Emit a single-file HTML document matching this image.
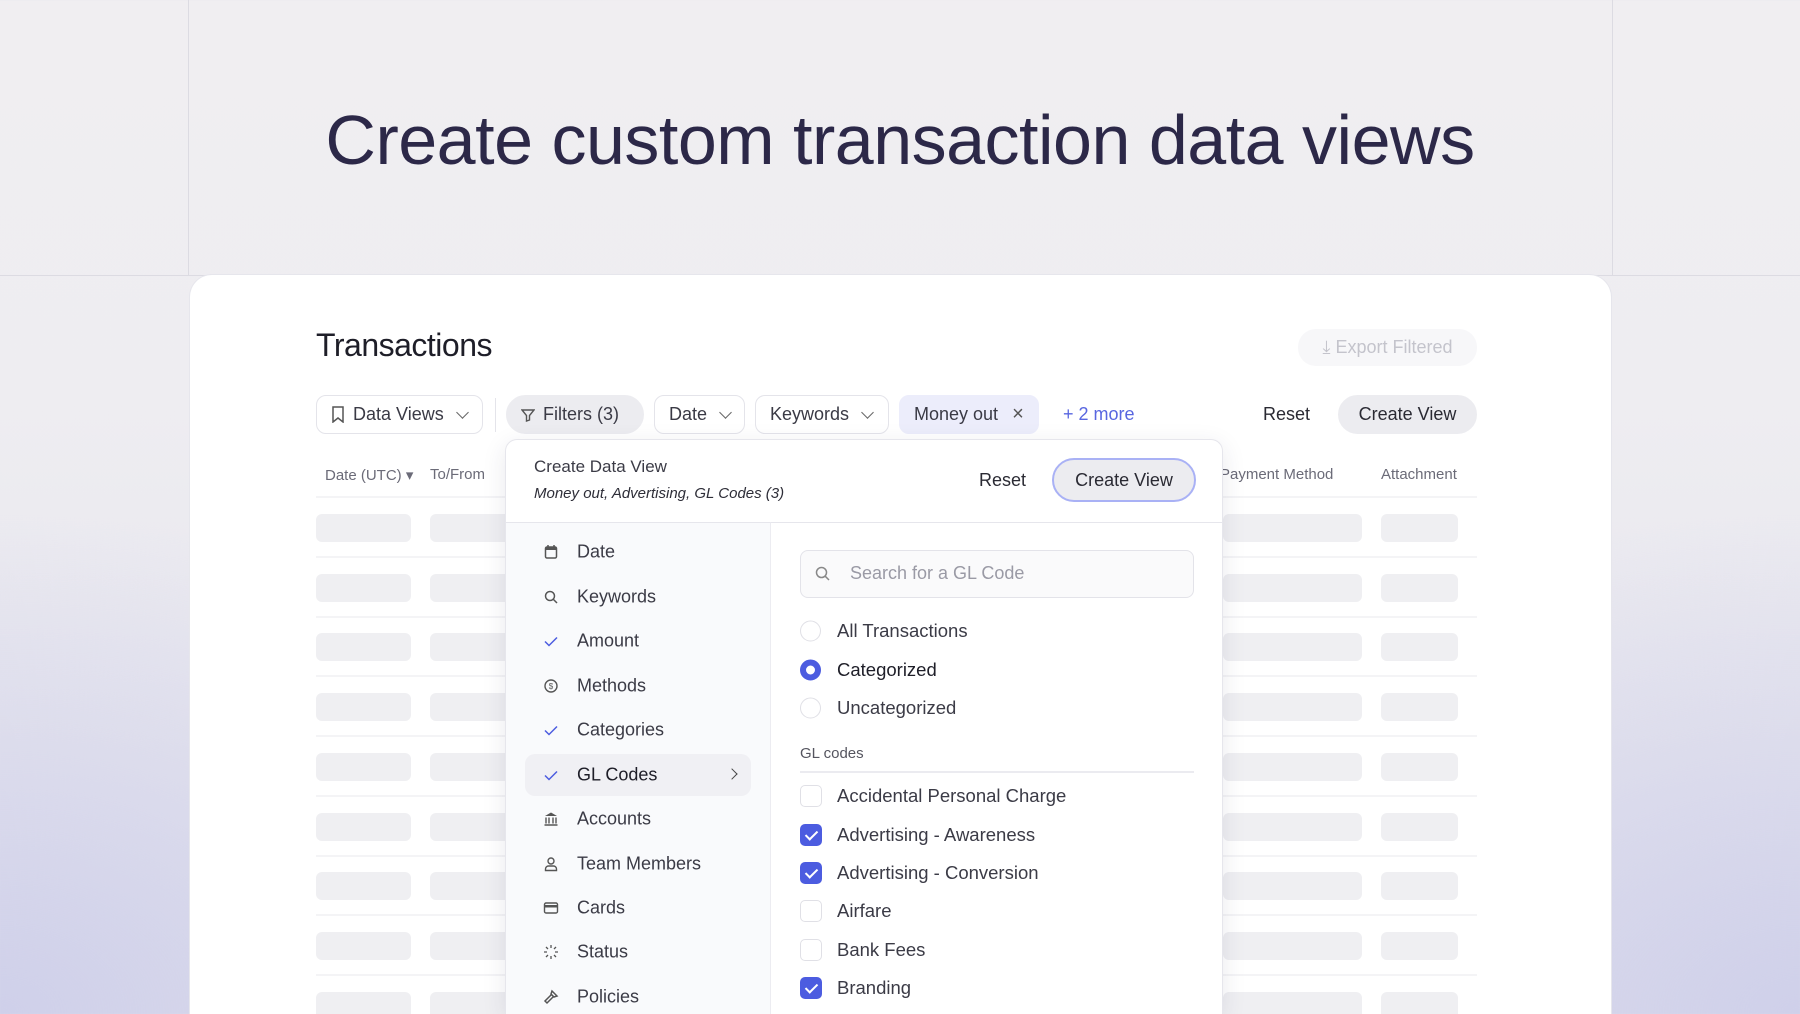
<!DOCTYPE html>
<html style="width:1800px;height:1014px;overflow:hidden"><head><meta charset="utf-8"><style>
*{margin:0;padding:0;box-sizing:border-box}
body{width:1800px;height:1014px;overflow:hidden;font-family:"Liberation Sans",sans-serif;position:relative;
background:radial-gradient(ellipse 700px 500px at 0% 100%,#cfd0ea 0%,rgba(207,208,234,0) 100%),radial-gradient(ellipse 700px 500px at 100% 100%,#cfd0ea 0%,rgba(207,208,234,0) 100%),linear-gradient(#f0eef1,#eeedf1 40%,#e2e1ec);}
.a{position:absolute}
.vl{position:absolute;top:0;height:275px;width:1px;background:#dcdbe2}
.hl{position:absolute;top:275px;height:1px;background:#dcdbe2}
.card{left:190px;top:275px;width:1421px;height:739px;background:#fff;border-radius:22px 22px 0 0;box-shadow:0 0 0 1px #e6e6ec}
.btn{position:absolute;top:395px;height:39px;border-radius:10px;border:1px solid #e4e4ea;display:flex;align-items:center;font-size:18px;color:#3a3a45;padding-left:14px;gap:8px;background:#fff}
.chev{width:9px;height:9px;border-right:1.6px solid #666;border-bottom:1.6px solid #666;transform:rotate(45deg);margin-top:-5px;margin-left:6px}
.th{position:absolute;top:466px;font-size:15px;color:#6b6b78}
.sk{position:absolute;height:28px;background:#efeff2;border-radius:6px}
.rl{position:absolute;height:2px;background:#f4f4f6}
.mi{position:absolute;left:577px;font-size:18px;color:#3b3b46;transform:translateY(-50%)}
.ic{position:absolute;left:543px;width:16px;height:16px;transform:translateY(-50%)}
.rad{position:absolute;left:800px;width:21px;height:21px;border-radius:50%;border:1.5px solid #e0e0e6;background:#fff;transform:translateY(-50%)}
.cb{position:absolute;left:800px;width:22px;height:22px;border-radius:5px;border:1.5px solid #e0e0e6;background:#fff;transform:translateY(-50%)}
.cb.on{background:#4c5ce0;border-color:#4c5ce0}
.cb.on::after{content:"";position:absolute;left:7px;top:3px;width:5px;height:10px;border-right:2px solid #fff;border-bottom:2px solid #fff;transform:rotate(45deg)}
.lt{position:absolute;left:837px;font-size:18.5px;color:#3b3b46;transform:translateY(-50%)}
</style></head><body>
<div class="vl" style="left:188px"></div><div class="vl" style="left:1612px"></div>
<div class="hl" style="left:0;width:1800px"></div>
<div class="a" style="left:0;width:1800px;top:100px;text-align:center;font-size:70px;color:#2c2848;letter-spacing:-0.5px">Create custom transaction data views</div>
<div class="a card"></div>
<div class="a" style="left:316px;top:327px;font-size:32px;color:#1e1e28;letter-spacing:-0.5px">Transactions</div>
<div class="a" style="left:1298px;top:329px;width:179px;height:37px;border-radius:18px;background:#f7f7f9;color:#c4c4cc;font-size:18px;display:flex;align-items:center;justify-content:center">⤓&nbsp;Export Filtered</div>
<div class="btn" style="left:316px;width:167px"><svg width="14" height="17" viewBox="0 0 14 17"><path d="M2 1h10v15l-5-4-5 4z" fill="none" stroke="#555" stroke-width="1.5"/></svg>Data Views<span class="chev"></span></div>
<div class="a" style="left:495px;top:398px;width:1px;height:34px;background:#e4e4ea"></div>
<div class="btn" style="left:506px;width:138px;background:#ececf0;border-color:#ececf0;border-radius:20px"><svg width="14" height="14" viewBox="0 0 14 14"><path d="M1 2h12L8.5 7.5V12l-3 1V7.5z" fill="none" stroke="#555" stroke-width="1.4"/></svg>Filters (3)</div>
<div class="btn" style="left:654px;width:91px">Date<span class="chev"></span></div>
<div class="btn" style="left:755px;width:134px">Keywords<span class="chev"></span></div>
<div class="btn" style="left:899px;width:140px;background:#ecedfb;border-color:#ecedfb">Money out<span style="font-size:20px;color:#555;margin-left:6px">×</span></div>
<div class="a" style="left:1063px;top:404px;font-size:18px;color:#5866e0">+ 2 more</div>
<div class="a" style="left:1263px;top:404px;font-size:18px;color:#2a2a33">Reset</div>
<div class="btn" style="left:1338px;width:139px;background:#ececf0;border-color:#ececf0;border-radius:20px;justify-content:center;padding:0;color:#2a2a33">Create View</div>
<div class="th" style="left:325px">Date (UTC) ▾</div>
<div class="th" style="left:430px">To/From</div>
<div class="th" style="left:1220px">Payment Method</div>
<div class="th" style="left:1381px">Attachment</div>
<div class="rl" style="left:316px;width:1161px;top:496px"></div>
<div id="rows"></div>
<script>
var h='';for(var i=0;i<9;i++){var t=514+59.7*i;h+='<div class="sk" style="left:316px;width:95px;top:'+t+'px"></div><div class="sk" style="left:430px;width:90px;top:'+t+'px"></div><div class="sk" style="left:1223px;width:139px;top:'+t+'px"></div><div class="sk" style="left:1381px;width:77px;top:'+t+'px"></div>';if(i<8)h+='<div class="rl" style="left:316px;width:1161px;top:'+(t+42)+'px"></div>';}
document.getElementById('rows').innerHTML=h;
</script>
<div class="a" style="left:505px;top:439px;width:718px;height:575px;background:#fff;border:1px solid #e6e6ec;border-bottom:none;border-radius:12px 12px 0 0;box-shadow:0 6px 24px rgba(40,40,80,.10);overflow:hidden">
 <div class="a" style="left:0;top:82px;width:265px;height:520px;background:#f9fafc;border-right:1px solid #ececf1;border-top:1px solid #e6e6ec"></div>
 <div class="a" style="left:265px;top:82px;width:460px;height:1px;background:#e6e6ec"></div>
</div>
<div class="a" style="left:534px;top:457px;font-size:17px;color:#3b3b46">Create Data View</div>
<div class="a" style="left:534px;top:485px;font-size:15px;color:#2e2e38;font-style:italic">Money out, Advertising, GL Codes (3)</div>
<div class="a" style="left:979px;top:470px;font-size:18px;color:#2a2a33">Reset</div>
<div class="a" style="left:1052px;top:458px;width:144px;height:44px;border-radius:22px;border:2px solid #a9b1f5;background:#ececf0;font-size:18px;color:#2a2a33;display:flex;align-items:center;justify-content:center">Create View</div>
<div class="a" style="left:525px;top:754px;width:226px;height:42px;background:#f0f0f4;border-radius:10px"></div>
<div class="a" style="left:728px;top:770px;width:8px;height:8px;border-right:1.8px solid #444;border-top:1.8px solid #444;transform:rotate(45deg)"></div>
<svg class="ic" style="top:552px" viewBox="0 0 16 16"><rect x="2.5" y="3" width="11" height="11" rx="1.5" fill="none" stroke="#555" stroke-width="1.5"/><rect x="2.5" y="3" width="11" height="3" fill="#555"/><path d="M5 1v3M11 1v3" stroke="#555" stroke-width="1.5"/></svg>
<svg class="ic" style="top:597px" viewBox="0 0 16 16"><circle cx="7" cy="7" r="4.5" fill="none" stroke="#555" stroke-width="1.5"/><path d="M10.5 10.5L14 14" stroke="#555" stroke-width="1.5"/></svg>
<svg class="ic" style="top:641px" viewBox="0 0 16 16"><path d="M2 8.5l4 4 8-8" fill="none" stroke="#4c5ce0" stroke-width="1.5"/></svg>
<svg class="ic" style="top:686px" viewBox="0 0 16 16"><circle cx="8" cy="8" r="6" fill="none" stroke="#555" stroke-width="1.4"/><text x="8" y="11" font-size="8" text-anchor="middle" fill="#555" font-family="Liberation Sans">$</text></svg>
<svg class="ic" style="top:730px" viewBox="0 0 16 16"><path d="M2 8.5l4 4 8-8" fill="none" stroke="#4c5ce0" stroke-width="1.5"/></svg>
<svg class="ic" style="top:775px" viewBox="0 0 16 16"><path d="M2 8.5l4 4 8-8" fill="none" stroke="#4c5ce0" stroke-width="1.5"/></svg>
<svg class="ic" style="top:819px" viewBox="0 0 16 16"><path d="M8 1.5L2 5h12z" fill="#555"/><path d="M3 6.5v6M6 6.5v6M10 6.5v6M13 6.5v6M1.5 14h13" stroke="#555" stroke-width="1.4"/></svg>
<svg class="ic" style="top:864px" viewBox="0 0 16 16"><circle cx="8" cy="5" r="3" fill="none" stroke="#555" stroke-width="1.4"/><path d="M2.5 14.5v-1.5a3 3 0 0 1 3-3h5a3 3 0 0 1 3 3v1.5z" fill="none" stroke="#555" stroke-width="1.4"/></svg>
<svg class="ic" style="top:908px" viewBox="0 0 16 16"><rect x="1.5" y="3" width="13" height="10" rx="1.5" fill="none" stroke="#555" stroke-width="1.4"/><rect x="1.5" y="5" width="13" height="2.5" fill="#555"/></svg>
<svg class="ic" style="top:952px" viewBox="0 0 16 16"><path d="M8 1v3M8 12v3M1 8h3M12 8h3M3 3l2 2M11 11l2 2M3 13l2-2M11 5l2-2" stroke="#555" stroke-width="1.3"/></svg>
<svg class="ic" style="top:997px" viewBox="0 0 16 16"><path d="M9 2l5 5-3 1-3-3zM8 6l-6 6 2 2 6-6" fill="none" stroke="#555" stroke-width="1.5"/></svg>
<div class="mi" style="top:552px">Date</div>
<div class="mi" style="top:597px">Keywords</div>
<div class="mi" style="top:641px">Amount</div>
<div class="mi" style="top:686px">Methods</div>
<div class="mi" style="top:730px">Categories</div>
<div class="mi" style="top:775px;color:#1e1e28">GL Codes</div>
<div class="mi" style="top:819px">Accounts</div>
<div class="mi" style="top:864px">Team Members</div>
<div class="mi" style="top:908px">Cards</div>
<div class="mi" style="top:952px">Status</div>
<div class="mi" style="top:997px">Policies</div>
<div class="a" style="left:800px;top:550px;width:394px;height:48px;border:1.5px solid #e3e3e9;border-radius:8px;background:#fafafb"></div>
<svg class="a" style="left:814px;top:565px" width="18" height="18" viewBox="0 0 18 18"><circle cx="7.5" cy="7.5" r="5" fill="none" stroke="#888" stroke-width="1.5"/><path d="M11.3 11.3L15 15" stroke="#888" stroke-width="1.5"/></svg>
<div class="a" style="left:850px;top:563px;font-size:18px;color:#9a9aa5">Search for a GL Code</div>
<div class="rad" style="top:631px"></div>
<div class="rad" style="top:670px;border:6px solid #4c5ce0"></div>
<div class="rad" style="top:708px"></div>
<div class="lt" style="top:631px">All Transactions</div>
<div class="lt" style="top:670px;color:#1e1e28">Categorized</div>
<div class="lt" style="top:708px">Uncategorized</div>
<div class="a" style="left:800px;top:745px;font-size:15px;color:#55555f">GL codes</div>
<div class="a" style="left:800px;top:771px;width:394px;height:1.5px;background:#ebebf0"></div>
<div class="cb" style="top:796px"></div><div class="lt" style="top:796px">Accidental Personal Charge</div>
<div class="cb on" style="top:835px"></div><div class="lt" style="top:835px">Advertising - Awareness</div>
<div class="cb on" style="top:873px"></div><div class="lt" style="top:873px">Advertising - Conversion</div>
<div class="cb" style="top:911px"></div><div class="lt" style="top:911px">Airfare</div>
<div class="cb" style="top:950px"></div><div class="lt" style="top:950px">Bank Fees</div>
<div class="cb on" style="top:988px"></div><div class="lt" style="top:988px">Branding</div>
</body></html>
